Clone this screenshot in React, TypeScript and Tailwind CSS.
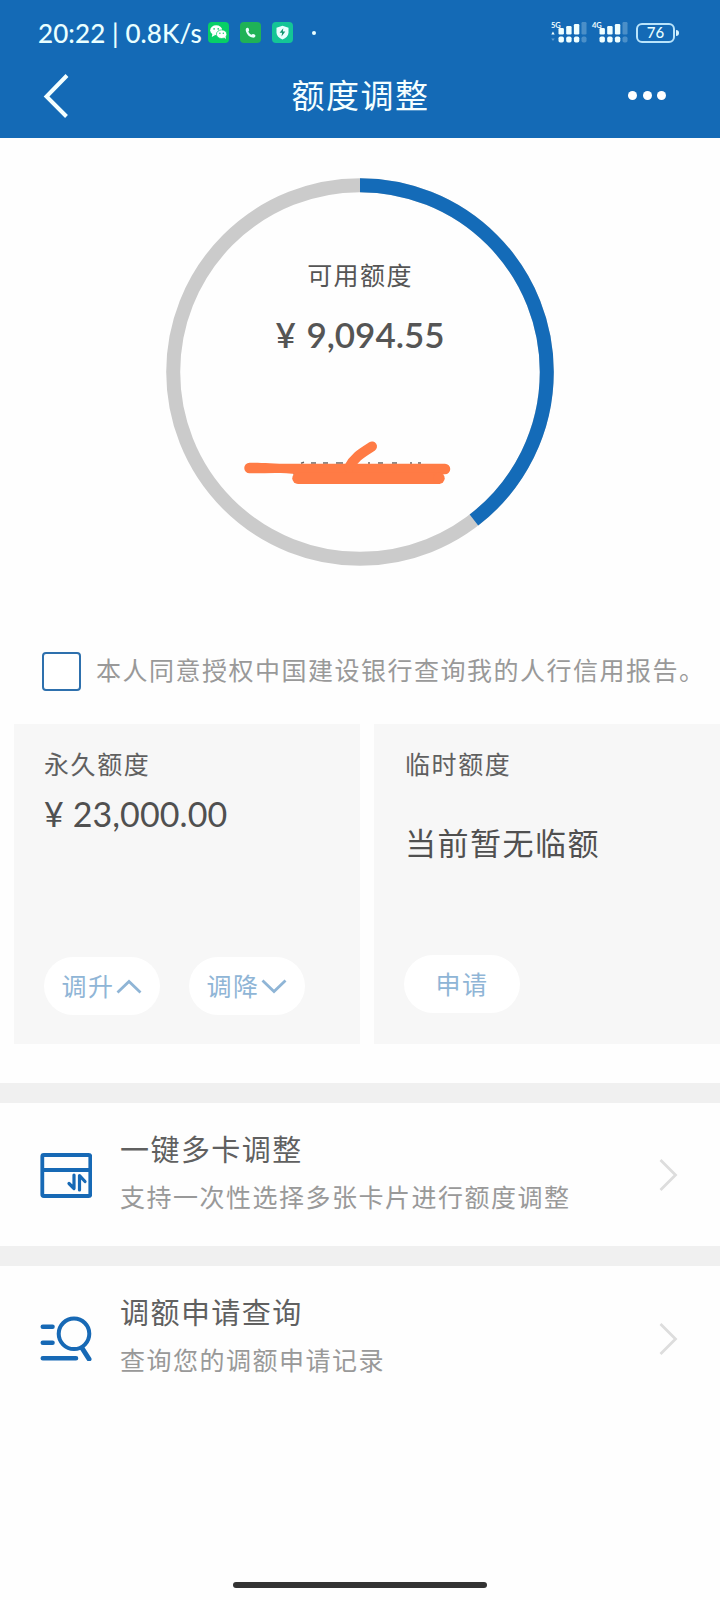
import type { ReactNode } from "react";

const LIMIT = 23000;
const AVAILABLE = 9094.55;

const RADIUS = 186.8;
const CIRCUMFERENCE = 2 * Math.PI * RADIUS;

const money = (n: number) => n.toLocaleString("en-US", { minimumFractionDigits: 2 });

function Signal({ label, arrows }: { label: string; arrows?: boolean }) {
  const bars = [
    { x: 7.5, y: 6, h: 6.5 },
    { x: 15.2, y: 4, h: 8.5 },
    { x: 22.9, y: 2, h: 10.5 },
  ];
  return (
    <svg width="36" height="22" viewBox="0 0 36 22" fill="#f0ffff" className="overflow-visible">
      <text x="0" y="6" fontSize="7.5" fontWeight="700" fontFamily="Lato, sans-serif">{label}</text>
      {arrows && <path d="M0.3 12.5h3.4L2 9.5z" />}
      {arrows && <path d="M0.3 16.5h3.4L2 19z" opacity="0.35" />}
      {bars.map((b) => <rect key={b.x} x={b.x} y={b.y} width="5.4" height={b.h} rx="1.2" />)}
      {bars.map((b) => <rect key={b.x} x={b.x} y="14.5" width="5.4" height="6" rx="1.8" />)}
      <g opacity="0.25">
        <rect x="30.5" y="0" width="5" height="12.5" rx="1.2" />
        <rect x="30.5" y="14.5" width="5" height="6" rx="1.8" />
      </g>
    </svg>
  );
}

function StatusBar() {
  return (
    <div className="flex h-[65px] items-center pl-[38px] pr-[41px] text-[#eaffff]">
      <span className="w-[165px] whitespace-nowrap text-[26px] font-medium leading-none tracking-[0.1px]">20:22 | 0.8K/s</span>
      <div className="ml-[5px] flex items-center gap-[11px]">
        <svg width="21" height="21" viewBox="0 0 21 21">
          <rect width="21" height="21" rx="4" fill="#07cf66" />
          <ellipse cx="8.2" cy="8.3" rx="6" ry="5" fill="#fff" />
          <path d="M4.5 11.5L3.8 15l3.4-2z" fill="#fff" />
          <ellipse cx="13.6" cy="12.2" rx="5.2" ry="4.3" fill="#fff" stroke="#07cf66" strokeWidth="0.7" />
          <path d="M16 15.3l1.7 2 .1-3z" fill="#fff" />
          <g fill="#07cf66">
            <circle cx="6.1" cy="6.9" r="0.8" />
            <circle cx="10.2" cy="6.9" r="0.8" />
            <circle cx="11.9" cy="11.2" r="0.7" />
            <circle cx="15.3" cy="11.2" r="0.7" />
          </g>
        </svg>
        <svg width="21" height="21" viewBox="0 0 21 21">
          <rect width="21" height="21" rx="4" fill="#1fb257" />
          <path d="M7.2 5.7C5.6 6 5.5 7.8 6 9.4c.9 3 3.2 5.3 6.2 6.1 1.5.4 3 .1 3.2-1.5.1-.8-.2-1.1-.8-1.4l-1.4-.5c-.7-.2-1 .2-1.5.7-1.7-.7-2.9-1.9-3.4-3.4.6-.4 1-.8.8-1.5l-.4-1.4c-.2-.6-.7-.9-1.5-.8z" fill="#eaffff" />
        </svg>
        <svg width="21" height="21" viewBox="0 0 21 21">
          <rect width="21" height="21" rx="4" fill="#14c596" />
          <path d="M10.5 3.7l6 2v5.1c0 3-2.5 5.2-6 6.7-3.5-1.5-6-3.7-6-6.7V5.7z" fill="#eaffff" />
          <path d="M11.3 6.3l-3.7 4.500h2.500l-.6 3.700 3.800-4.900h-2.500z" fill="#12936e" />
        </svg>
      </div>
      <span className="ml-[19px] h-1 w-1 rounded-full bg-[#eaffff]" />
      <div className="ml-auto flex items-center">
        <Signal label="5G" arrows />
        <div className="ml-[5px]"><Signal label="4G" /></div>
        <div className="ml-[8px] flex h-[20px] w-[39px] items-center justify-center rounded-[6px] border-2 border-[#b9e4fb] text-[15px] font-medium leading-none">76</div>
        <span className="ml-px h-[6px] w-[3px] rounded-r-full bg-[#d5f3ff]" />
      </div>
    </div>
  );
}

function TitleBar() {
  return (
    <div className="grid h-[73px] grid-cols-[1fr_auto_1fr] items-center pb-[12px] pl-[43px] pr-[54px]">
      <svg width="27" height="46" viewBox="0 0 27 46" fill="none" stroke="#f4ffff" strokeWidth="4">
        <path d="M24 2.5L3.5 23.5 23.5 43.5" />
      </svg>
      <h1 className="ml-[12px] text-[33px] leading-none tracking-[1.5px] text-[#f4ffff]">额度调整</h1>
      <div className="flex justify-end gap-[5.5px]">
        <span className="h-[9px] w-[9px] rounded-full bg-white" />
        <span className="h-[9px] w-[9px] rounded-full bg-white" />
        <span className="h-[9px] w-[9px] rounded-full bg-white" />
      </div>
    </div>
  );
}

function LimitRing() {
  return (
    <div className="relative mx-auto mt-[39.5px] h-[388px] w-[388px]">
      <svg width="388" height="388" viewBox="0 0 388 388" fill="none" strokeWidth="14" className="absolute inset-0">
        <circle cx="194" cy="194" r={RADIUS} stroke="#cbcbcb" />
        <circle
          cx="194" cy="194" r={RADIUS} stroke="#146bb8" transform="rotate(-90 194 194)"
          strokeDasharray={`${(CIRCUMFERENCE * AVAILABLE) / LIMIT} ${CIRCUMFERENCE}`}
        />
        {/* marker strokes over the card number */}
        <g transform="translate(0 4.5)">
          <path d="M128 282v10M135 280.8l3-1M145 280.5h5M157 280.5h5M170 280.5h7M202 280.5h2M212 280.5h5M226 280.5h5M244 280.5h2M252 280.5h3" stroke="#666" strokeWidth="1.5" />
          <g fill="#ff7b45">
            <path d="M83.500 280.200C95 279.800 108 281.500 130 281.200H279A5.200 5.200 0 0 1 279 291.700H132C115 289.500 100 290.800 83.500 290.700A5.200 5.200 0 0 1 83.500 280.200z" />
            <path d="M132 290H274V301.500H132A5.700 5.700 0 0 1 132 290z" />
            <circle cx="273" cy="295.800" r="5.700" />
          </g>
          <path d="M183 285C188 275 195 271 206 264" stroke="#ff7b45" strokeLinecap="round" strokeWidth="10" />
        </g>
      </svg>
      <div className="relative flex flex-col items-center pt-[81px] text-[#555]">
        <span className="text-[25px] leading-8 tracking-[1.4px]">可用额度</span>
        <span className="mt-[23px] whitespace-nowrap text-[35px] font-semibold leading-10 [word-spacing:2px]">¥ {money(AVAILABLE)}</span>
      </div>
    </div>
  );
}

function Pill({ children }: { children: ReactNode }) {
  return (
    <button className="flex h-[58px] w-[116px] items-center justify-center rounded-full bg-white pt-[2px] text-[25px] leading-none tracking-[1.4px] text-[#8fb5d6]">
      {children}
    </button>
  );
}

function Chevron({ d }: { d: string }) {
  return (
    <svg width="26" height="15" viewBox="0 0 26 15" fill="none" stroke="#8fb5d6" strokeWidth="2.8" className="ml-[2px]">
      <path d={d} />
    </svg>
  );
}

function MenuRow({ icon, title, desc }: { icon: ReactNode; title: string; desc: string }) {
  return (
    <div className="flex h-[163.5px] items-start border-t-[20px] border-[#f0f0f0] pl-[40px] pr-[42px]">
      <div className="mt-[50px] w-[52px]">{icon}</div>
      <div className="ml-[28px] mt-[27px] flex-1">
        <div className="text-[29px] leading-10 tracking-[1.45px] text-[#606060]">{title}</div>
        <div className="mt-[9px] text-[25px] leading-9 tracking-[1.5px] text-[#999]">{desc}</div>
      </div>
      <svg width="19" height="32" viewBox="0 0 19 32" fill="none" stroke="#ddd" strokeWidth="2.8" className="mt-[56.5px]">
        <path d="M1.5 1L16.5 16 1.5 31" />
      </svg>
    </div>
  );
}

const cardIcon = (
  <svg width="52" height="45" viewBox="0 0 52 45" fill="none" stroke="#1769b5" strokeWidth="3.8" strokeLinejoin="round">
    <rect x="2.3" y="2" width="48" height="41" rx="1.5" />
    <path d="M2 17H50" />
    <path d="M29 30.5L34 35.500V22M39.500 37V22.500L45 28.500" strokeLinecap="round" strokeWidth="3.200" />
  </svg>
);

const searchIcon = (
  <svg width="52" height="45" viewBox="0 0 52 45" fill="none" stroke="#1769b5" strokeWidth="4.6" strokeLinecap="round">
    <path d="M2.8 10.8H12.5M2.8 26.800H12.500M2.800 42.300H36" />
    <circle cx="34" cy="17.800" r="15.300" strokeWidth="4" />
    <path d="M42 32L49 43" strokeWidth="5" />
  </svg>
);

export default function App() {
  return (
    <div className="flex h-[1600px] w-[720px] flex-col overflow-hidden bg-[#fefefe] font-[Lato,'Noto_Sans_CJK_SC',sans-serif]">
      <header className="h-[138px] shrink-0 bg-[#146ab6]">
        <StatusBar />
        <TitleBar />
      </header>

      <LimitRing />

      <label className="mt-[86px] flex h-[40px] items-center pl-[42px]">
        <span className="h-[39px] w-[39px] shrink-0 rounded-[4px] border-2 border-[#2e70ad] bg-white" />
        <span className="-mt-[2px] ml-[15px] whitespace-nowrap text-[25px] leading-none tracking-[1.5px] text-[#999]">本人同意授权中国建设银行查询我的人行信用报告。</span>
      </label>

      <div className="mt-[32px] flex h-[320px] shrink-0 gap-[14px] pl-[14px]">
        <section className="flex w-[346px] shrink-0 flex-col bg-[#f7f7f7] pl-[30px] pt-[22px]">
          <span className="text-[25px] leading-9 tracking-[1.6px] text-[#606060]">永久额度</span>
          <span className="mt-[12px] text-[34px] leading-10 tracking-[0.1px] text-[#505050]">¥ {money(LIMIT)}</span>
          <div className="mb-[29px] mt-auto flex gap-[29px]">
            <Pill>调升<Chevron d="M1.5 13.5L13 2.5 24.5 13.5" /></Pill>
            <Pill>调降<Chevron d="M1.5 1.5L13 12.5 24.5 1.5" /></Pill>
          </div>
        </section>
        <section className="flex w-[346px] shrink-0 flex-col bg-[#f7f7f7] pl-[30px] pt-[22px]">
          <span className="pl-px text-[25px] leading-9 tracking-[1.6px] text-[#606060]">临时额度</span>
          <span className="mt-[41px] pl-px text-[31px] leading-10 tracking-[1.5px] text-[#505050]">当前暂无临额</span>
          <div className="mb-[31px] mt-auto"><Pill>申请</Pill></div>
        </section>
      </div>

      <div className="mt-[39px]">
        <MenuRow icon={cardIcon} title="一键多卡调整" desc="支持一次性选择多张卡片进行额度调整" />
        <MenuRow icon={searchIcon} title="调额申请查询" desc="查询您的调额申请记录" />
      </div>

      <div className="mx-auto mb-[12px] mt-auto h-[6px] w-[254px] rounded-full bg-[#333]" />
    </div>
  );
}
